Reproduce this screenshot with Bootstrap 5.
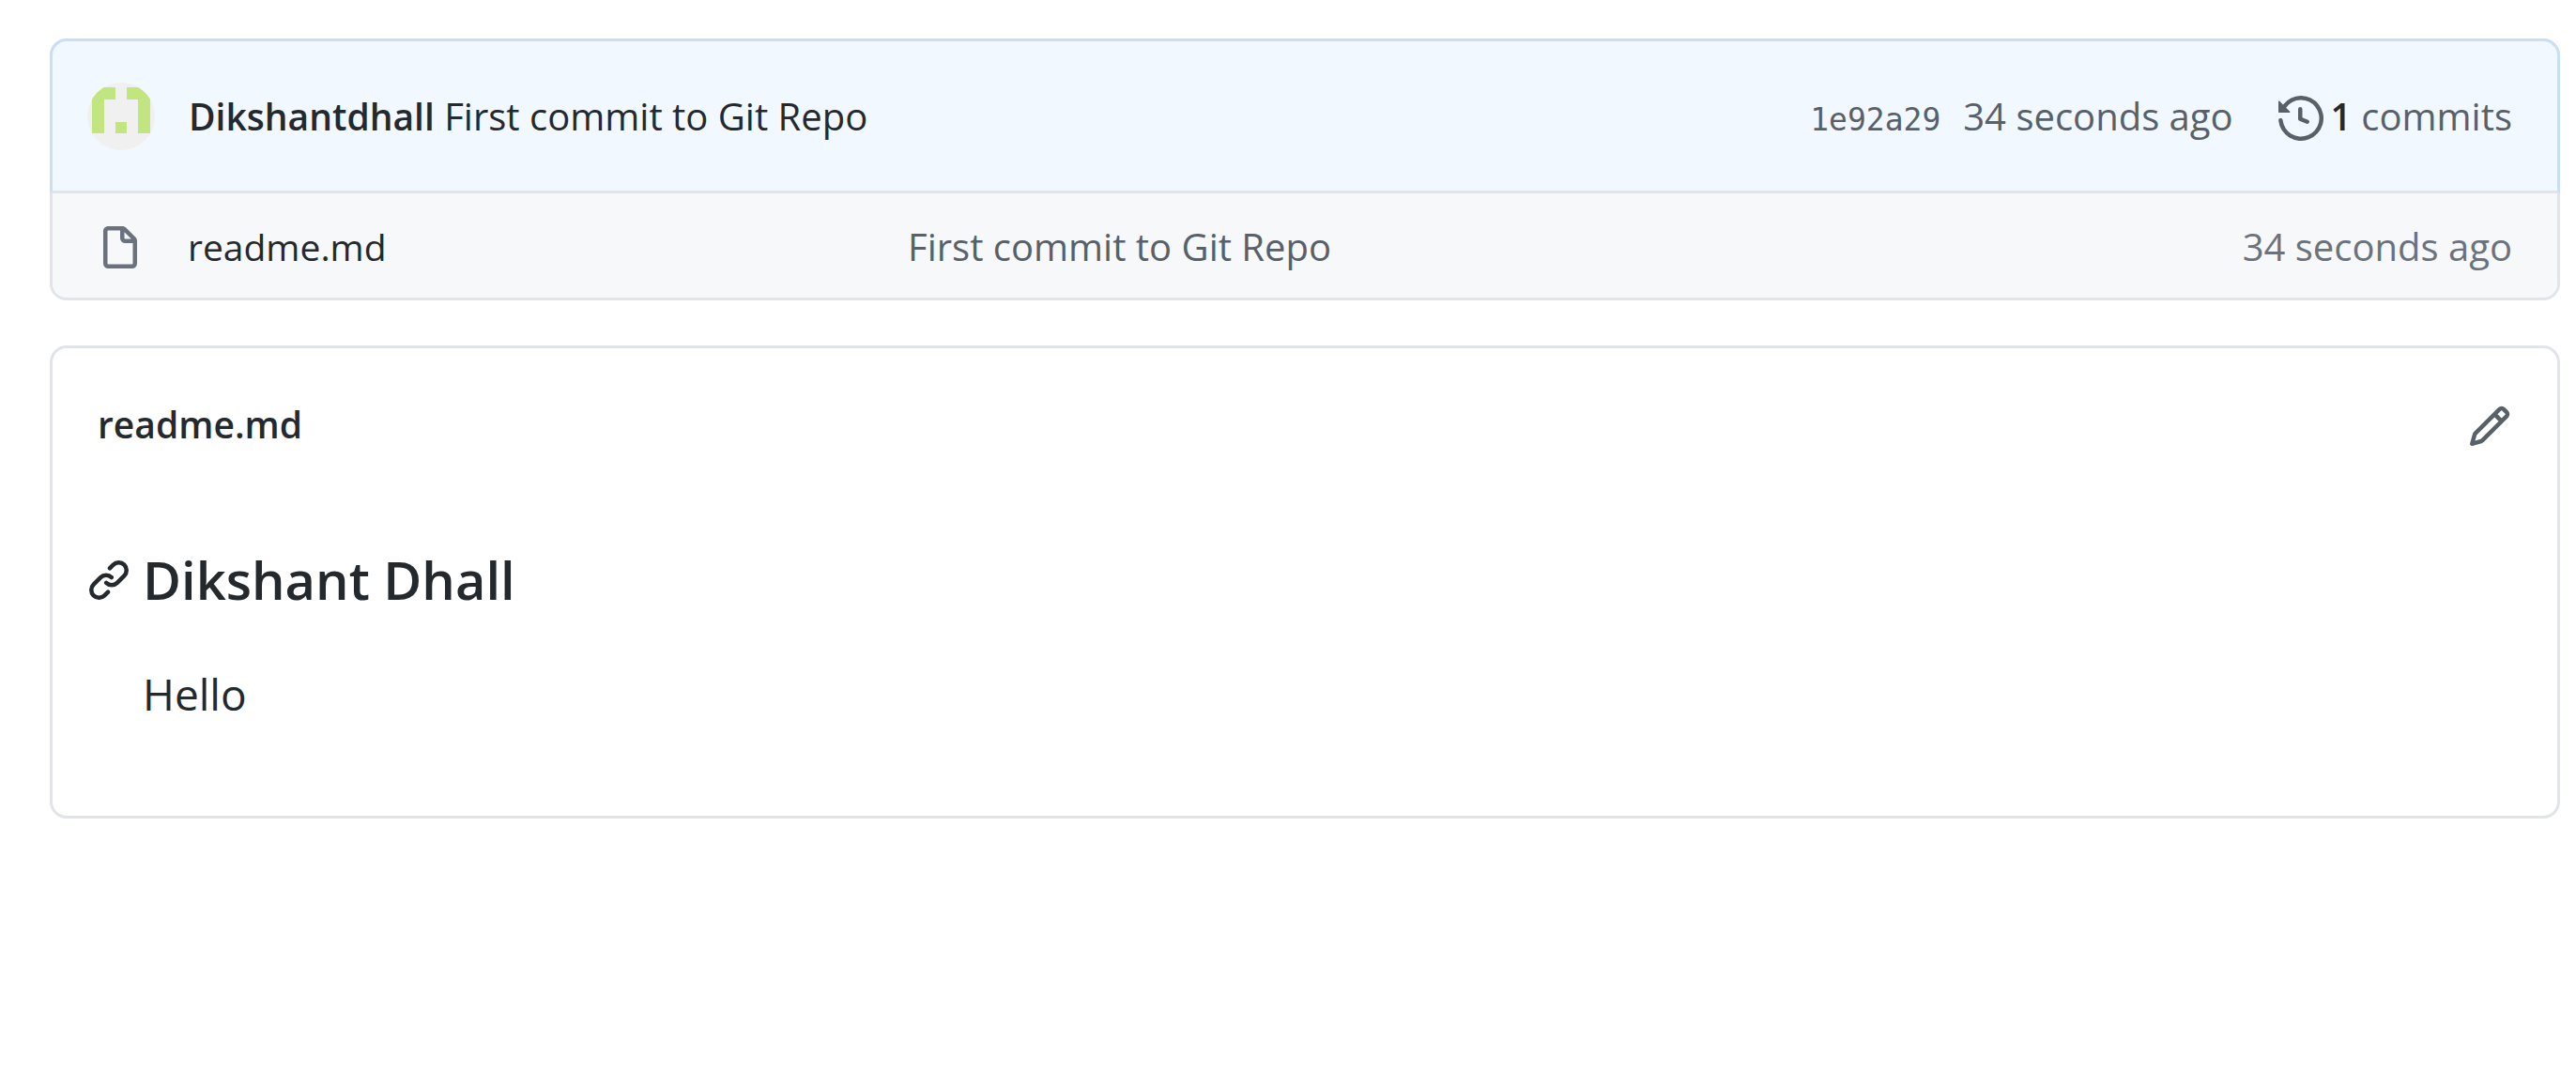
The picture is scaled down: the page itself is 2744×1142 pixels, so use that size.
<!DOCTYPE html>
<html lang="en">
<head>
<meta charset="utf-8">
<meta name="viewport" content="width=device-width, initial-scale=1">
<title>readme.md</title>
<link href="https://cdn.jsdelivr.net/npm/bootstrap@5.3.0/dist/css/bootstrap.min.css" rel="stylesheet">
<style>
  body { font-family: "Open Sans", "Noto Sans", sans-serif; font-size: 40px; line-height: 60px; color: #24292e; background: #fff; }
  a { color: inherit; text-decoration: none; }
  a:hover { text-decoration: underline; }
  svg { display: block; flex: none; fill: currentColor; }
  .page { padding: 41px 17px 48px 53px; }
  .box { border: 3px solid #e1e4e8; border-radius: 18px; }
  .commit-bar { margin: -3px -3px 0; padding: 44px 48px 43px 37px; border: 3px solid #c9dff6; border-bottom-color: #e1e4e8; border-radius: 18px 18px 0 0; background: #f1f8ff; }
  .file-row { padding: 27px 48px 24px; background: #f6f8fa; border-radius: 0 0 15px 15px; }
  .avatar-link { width: 108px; }
  .file-icon { width: 96px; }
  .file-icon svg, .edit-btn svg, .history-icon { margin-top: 4px; }
  .file-name { width: 767px; max-width: 40%; }
  .name-text { font-size: 39px; }
  .readme-title { font-size: 39px; line-height: 60px; }
  .fw-semi { font-weight: 600; }
  .ink { color: #24292e; }
  .muted { color: #586069; }
  .edit-btn { color: #586069; }
  .age { color: #6a737d; }
  .sha { font-family: "DejaVu Sans Mono", "Liberation Mono", monospace; font-size: 33px; line-height: 1; }
  .readme { margin-top: 48px; }
  .readme-head { padding: 51px 48px 0; }
  .readme-body { padding: 98px 36px 94px; }
  .readme-body h1 { font-size: 56px; line-height: 75px; margin: 0 0 48px; }
  .anchor { width: 60px; }
  .readme-body p { font-size: 46px; line-height: 72px; margin: 0 0 0 60px; }
</style>
</head>
<body>
<main class="page">
  <section class="box">
    <div class="commit-bar d-flex align-items-center justify-content-between">
      <div class="d-flex align-items-center">
        <a href="#" class="avatar-link" aria-label="Dikshantdhall">
          <svg width="72" height="72" viewBox="0 0 72 72"><defs><clipPath id="round"><circle cx="36" cy="36" r="36"/></clipPath></defs><g clip-path="url(#round)"><path fill="#f0f0f0" d="M0 0h72v72H0z"/><path fill="#c1e57f" d="M5 5h25v13H18v36H5zM42 5h25v49H54V18H42zM30 42h12v12H30z"/></g></svg>
        </a>
        <div><a href="#" class="fw-semi name-text">Dikshantdhall</a> <a href="#">First commit to Git Repo</a></div>
      </div>
      <div class="d-flex align-items-center muted">
        <div class="d-flex align-items-baseline me-5">
          <a href="#" class="sha me-4">1e92a29</a>
          <a href="#">34 seconds ago</a>
        </div>
        <a href="#" class="d-flex align-items-center">
          <svg class="history-icon me-2" width="48" height="48" viewBox="0 0 16 16"><path d="M1.643 3.143L.427 1.927A.25.25 0 000 2.104V5.75c0 .138.112.25.25.25h3.646a.25.25 0 00.177-.427L2.715 4.215a6.5 6.5 0 11-1.18 4.458.75.75 0 10-1.493.154 8.001 8.001 0 101.6-5.684zM7.75 4a.75.75 0 01.75.75v2.992l2.028.812a.75.75 0 01-.557 1.392l-2.5-1A.75.75 0 017 8.25v-3.5A.75.75 0 017.75 4z"/></svg>
          <span><strong class="fw-semi ink name-text">1</strong> commits</span>
        </a>
      </div>
    </div>
    <div class="file-row d-flex align-items-center">
      <div class="file-icon age"><svg width="48" height="48" viewBox="0 0 16 16"><path d="M3.75 1.5a.25.25 0 00-.25.25v11.5c0 .138.112.25.25.25h8.5a.25.25 0 00.25-.25V6H9.75A1.75 1.75 0 018 4.25V1.5H3.75zm5.75.56v2.19c0 .138.112.25.25.25h2.19L9.5 2.06zM2 1.75C2 .784 2.784 0 3.75 0h5.086c.464 0 .909.184 1.237.513l3.414 3.414c.329.328.513.773.513 1.237v8.086A1.75 1.75 0 0112.25 15h-8.5A1.75 1.75 0 012 13.25V1.75z"/></svg></div>
      <div class="file-name"><a href="#" class="name-text">readme.md</a></div>
      <div class="flex-grow-1 muted"><a href="#">First commit to Git Repo</a></div>
      <div class="age">34 seconds ago</div>
    </div>
  </section>

  <section class="box readme">
    <div class="readme-head d-flex align-items-center justify-content-between">
      <h2 class="readme-title m-0 fw-semi"><a href="#">readme.md</a></h2>
      <button type="button" class="btn edit-btn p-0 border-0" aria-label="Edit file"><svg width="48" height="48" viewBox="0 0 16 16"><path d="M11.013 1.427a1.75 1.75 0 012.474 0l1.086 1.086a1.75 1.75 0 010 2.474l-8.61 8.61c-.21.21-.47.364-.756.445l-3.251.93a.75.75 0 01-.927-.928l.929-3.25a1.75 1.75 0 01.445-.758l8.61-8.61zm1.414 1.06a.25.25 0 00-.354 0L10.811 3.75l1.439 1.44 1.263-1.263a.25.25 0 000-.354l-1.086-1.086zM11.189 6.25L9.75 4.81l-6.286 6.287a.25.25 0 00-.064.108l-.558 1.953 1.953-.558a.249.249 0 00.108-.064l6.286-6.286z"/></svg></button>
    </div>
    <article class="readme-body">
      <h1 class="fw-semi d-flex align-items-center"><a href="#" class="anchor" aria-label="Permalink"><svg width="48" height="48" viewBox="0 0 16 16" fill="#1b1f23"><path d="M7.775 3.275a.75.75 0 001.06 1.06l1.25-1.25a2 2 0 112.83 2.83l-2.5 2.5a2 2 0 01-2.83 0 .75.75 0 00-1.06 1.06 3.5 3.5 0 004.95 0l2.5-2.5a3.5 3.5 0 00-4.95-4.95l-1.25 1.25zm-4.69 9.64a2 2 0 010-2.83l2.5-2.5a2 2 0 012.83 0 .75.75 0 001.06-1.06 3.5 3.5 0 00-4.95 0l-2.5 2.5a3.5 3.5 0 004.95 4.95l1.25-1.25a.75.75 0 00-1.06-1.06l-1.25 1.25a2 2 0 01-2.83 0z"/></svg></a>Dikshant Dhall</h1>
      <p>Hello</p>
    </article>
  </section>
</main>
<script src="https://cdn.jsdelivr.net/npm/bootstrap@5.3.0/dist/js/bootstrap.bundle.min.js"></script>
</body>
</html>
